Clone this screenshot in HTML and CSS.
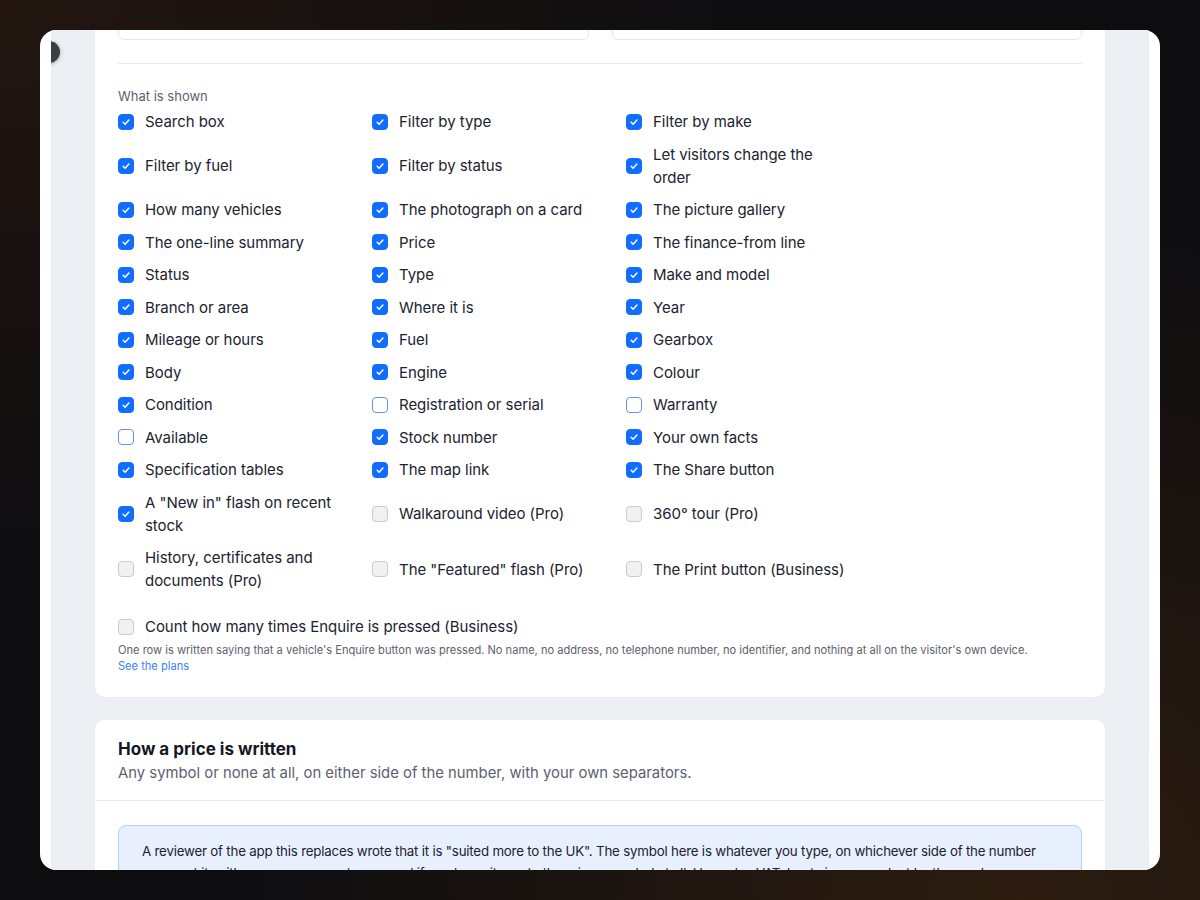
FILE: index.html
```html
<!DOCTYPE html>
<html lang="en">
<head>
    <meta charset="UTF-8">
    <meta name="viewport" content="width=device-width, initial-scale=1.0">
    <title>Vehicle listing settings</title>
    <link rel="stylesheet" href="styles.css">
</head>
<body>
    <div class="window">
        <div class="app">
            <button class="side-toggle" aria-label="Open menu"></button>
            <div class="scroll">
                <section class="card card-shown">
                    <div class="field-row">
                        <div class="field"></div>
                        <div class="field"></div>
                    </div>
                    <div class="divider"></div>

                    <div class="group-label">What is shown</div>
                    <div class="options">
                        <label class="option"><span class="box on"></span><span>Search box</span></label>
                        <label class="option"><span class="box on"></span><span>Filter by type</span></label>
                        <label class="option"><span class="box on"></span><span>Filter by make</span></label>

                        <label class="option"><span class="box on"></span><span>Filter by fuel</span></label>
                        <label class="option"><span class="box on"></span><span>Filter by status</span></label>
                        <label class="option"><span class="box on"></span><span>Let visitors change the order</span></label>

                        <label class="option"><span class="box on"></span><span>How many vehicles</span></label>
                        <label class="option"><span class="box on"></span><span>The photograph on a card</span></label>
                        <label class="option"><span class="box on"></span><span>The picture gallery</span></label>

                        <label class="option"><span class="box on"></span><span>The one-line summary</span></label>
                        <label class="option"><span class="box on"></span><span>Price</span></label>
                        <label class="option"><span class="box on"></span><span>The finance-from line</span></label>

                        <label class="option"><span class="box on"></span><span>Status</span></label>
                        <label class="option"><span class="box on"></span><span>Type</span></label>
                        <label class="option"><span class="box on"></span><span>Make and model</span></label>

                        <label class="option"><span class="box on"></span><span>Branch or area</span></label>
                        <label class="option"><span class="box on"></span><span>Where it is</span></label>
                        <label class="option"><span class="box on"></span><span>Year</span></label>

                        <label class="option"><span class="box on"></span><span>Mileage or hours</span></label>
                        <label class="option"><span class="box on"></span><span>Fuel</span></label>
                        <label class="option"><span class="box on"></span><span>Gearbox</span></label>

                        <label class="option"><span class="box on"></span><span>Body</span></label>
                        <label class="option"><span class="box on"></span><span>Engine</span></label>
                        <label class="option"><span class="box on"></span><span>Colour</span></label>

                        <label class="option"><span class="box on"></span><span>Condition</span></label>
                        <label class="option"><span class="box"></span><span>Registration or serial</span></label>
                        <label class="option"><span class="box"></span><span>Warranty</span></label>

                        <label class="option"><span class="box"></span><span>Available</span></label>
                        <label class="option"><span class="box on"></span><span>Stock number</span></label>
                        <label class="option"><span class="box on"></span><span>Your own facts</span></label>

                        <label class="option"><span class="box on"></span><span>Specification tables</span></label>
                        <label class="option"><span class="box on"></span><span>The map link</span></label>
                        <label class="option"><span class="box on"></span><span>The Share button</span></label>

                        <label class="option"><span class="box on"></span><span>A "New in" flash on recent stock</span></label>
                        <label class="option"><span class="box locked"></span><span>Walkaround video (Pro)</span></label>
                        <label class="option"><span class="box locked"></span><span>360° tour (Pro)</span></label>

                        <label class="option"><span class="box locked"></span><span>History, certificates and documents (Pro)</span></label>
                        <label class="option"><span class="box locked"></span><span>The "Featured" flash (Pro)</span></label>
                        <label class="option"><span class="box locked"></span><span>The Print button (Business)</span></label>
                    </div>

                    <label class="option option-count"><span class="box locked"></span><span>Count how many times Enquire is pressed (Business)</span></label>
                    <p class="note">One row is written saying that a vehicle's Enquire button was pressed. No name, no address, no telephone number, no identifier, and nothing at all on the visitor's own device.</p>
                    <a class="plans-link" href="#">See the plans</a>
                </section>

                <section class="card">
                    <div class="card-head">
                        <h2>How a price is written</h2>
                        <p>Any symbol or none at all, on either side of the number, with your own separators.</p>
                    </div>
                    <div class="card-body">
                        <div class="callout">
                            A reviewer of the app this replaces wrote that it is "suited more to the UK". The symbol here is whatever you type, on whichever side of the number you want it, with your own separators — and if you leave it empty there is no symbol at all. Vans plus VAT, boats in euros, plant by the week.
                        </div>
                    </div>
                </section>
            </div>
        </div>
    </div>

    <script>
        // tick mark for every checked box
        document.querySelectorAll('.box.on').forEach(box => {
            box.innerHTML = '<svg viewBox="0 0 16 16" width="16" height="16"><path d="M5.2 8.3l1.9 1.9 3.8-4.2" fill="none" stroke="#fff" stroke-width="1.5" stroke-linecap="round" stroke-linejoin="round"/></svg>';
        });
    </script>
</body>
</html>
```

FILE: styles.css
```css
* {
    box-sizing: border-box;
}
body {
    margin: 0;
    width: 1200px;
    height: 900px;
    overflow: hidden;
    font-family: Inter, "Liberation Sans", Arial, sans-serif;
    color: #20232f;
    background:
        radial-gradient(ellipse at 0 0, rgba(40, 24, 16, 0.8), transparent 45%),
        radial-gradient(ellipse at 85% 100%, rgba(48, 30, 16, 0.9), transparent 55%),
        #0d0d10;
}
.window {
    margin: 30px 40px;
    height: 840px;
    padding: 0 11px;
    background: #fff;
    border-radius: 16px;
    overflow: hidden;
}
.app {
    position: relative;
    height: 100%;
    background: #eceff4;
    overflow: hidden;
    border-radius: 0 0 4px 4px;
}
.side-toggle {
    position: absolute;
    left: -13px;
    top: 11px;
    width: 22px;
    height: 22px;
    border: none;
    border-radius: 50%;
    background: #3b3e46;
    box-shadow: 0 1px 4px rgba(0, 0, 0, 0.3);
    padding: 0;
}
.scroll {
    padding: 0 44px;
    margin-top: -49px;
}
.card {
    background: #fff;
    border-radius: 10px;
    margin-bottom: 23px;
}
.card-shown {
    padding: 24px 23px 23px;
}
.field-row {
    display: grid;
    grid-template-columns: 1fr 1fr;
    gap: 23px;
}
.field {
    height: 35px;
    border: 1px solid #dce6f6;
    border-radius: 6px;
}
.divider {
    height: 1px;
    background: #e4e8ef;
    margin: 23px 0 23px;
}
.group-label {
    font-size: 13px;
    line-height: 18px;
    color: #5c6170;
    margin-bottom: 5px;
}
.options {
    display: grid;
    grid-template-columns: repeat(3, 224px);
    column-gap: 30px;
    row-gap: 9.5px;
}
.option {
    display: flex;
    align-items: center;
    gap: 11px;
    font-size: 15px;
    line-height: 23px;
    letter-spacing: -0.05px;
    cursor: pointer;
}
.box {
    flex: 0 0 16px;
    width: 16px;
    height: 16px;
    border-radius: 4px;
    border: 1px solid #5b95f7;
    background: #fff;
}
.box svg {
    display: block;
    margin: -1px;
}
.box.on {
    background: #116dff;
    border-color: #116dff;
}
.box.locked {
    background: #f1f1f3;
    border-color: #c9cad0;
}
.option-count {
    margin-top: 23px;
}
.note {
    margin: 4px 0 0;
    font-size: 11.1px;
    line-height: 16px;
    color: #5c6170;
}
.plans-link {
    display: block;
    font-size: 11.1px;
    line-height: 16px;
    color: #3b82f6;
    text-decoration: none;
}
.card-head {
    padding: 17px 23px 16px;
    border-bottom: 1px solid #e4e8ef;
}
.card-head h2 {
    margin: 0;
    font-size: 17px;
    line-height: 24px;
    font-weight: 700;
    color: #151824;
}
.card-head p {
    margin: 1px 0 0;
    font-size: 14.85px;
    line-height: 22px;
    color: #5c6170;
}
.card-body {
    padding: 24px 23px;
}
.callout {
    background: #e8f0fe;
    border: 1px solid #b8cff5;
    border-radius: 8px;
    padding: 14px 23px;
    font-size: 13.3px;
    line-height: 22px;
    letter-spacing: -0.2px;
    color: #20232f;
}
```
